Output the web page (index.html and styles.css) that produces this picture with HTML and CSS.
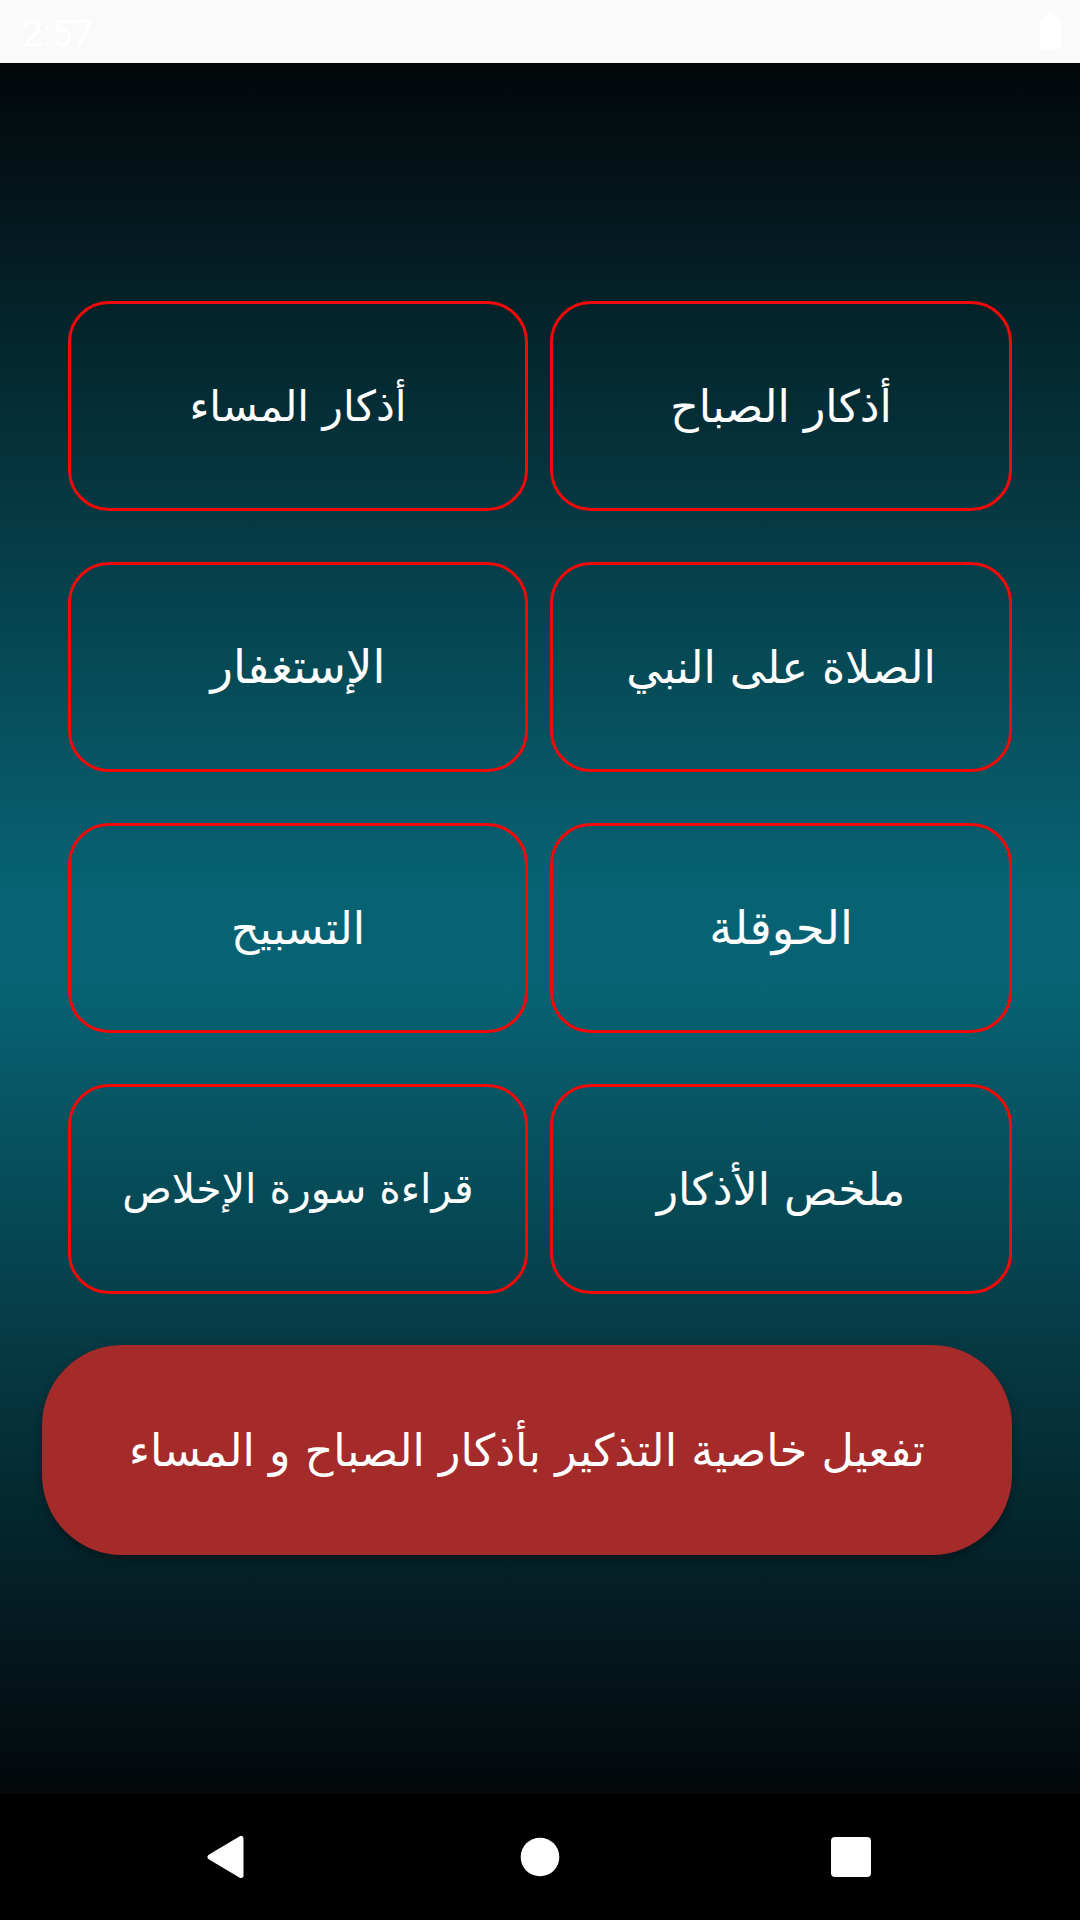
FILE: index.html
```html
<!DOCTYPE html>
<html lang="ar">
<head>
    <meta charset="UTF-8">
    <meta name="viewport" content="width=device-width, initial-scale=1.0">
    <title>الأذكار</title>
    <link rel="stylesheet" href="styles.css">
</head>
<body>
    <header class="status-bar">
        <span class="clock">2:57</span>
        <svg class="battery" width="22" height="36" viewBox="0 0 22 36">
            <path d="M7 3q0-3 3-3h2q3 0 3 3l4 2q3 1 3 4v27H1V8q0-3 3-4z" fill="#fff"/>
        </svg>
    </header>

    <main class="content">
        <div class="cards" dir="rtl">
            <a class="card">أذكار الصباح</a>
            <a class="card text-small">أذكار المساء</a>
            <a class="card">الصلاة على النبي</a>
            <a class="card text-large">الإستغفار</a>
            <a class="card text-large">الحوقلة</a>
            <a class="card">التسبيح</a>
            <a class="card">ملخص الأذكار</a>
            <a class="card text-smaller">قراءة سورة الإخلاص</a>
        </div>
        <button class="reminder-button" dir="rtl">تفعيل خاصية التذكير بأذكار الصباح و المساء</button>
    </main>

    <nav class="nav-bar">
        <svg width="38" height="44" viewBox="0 0 38 44">
            <path d="M34 3.500V40.500L3 22z" fill="#fff" stroke="#fff" stroke-width="5" stroke-linejoin="round"/>
        </svg>
        <svg width="40" height="40" viewBox="0 0 40 40">
            <circle cx="20" cy="20" r="19.300" fill="#fff"/>
        </svg>
        <svg width="40" height="40" viewBox="0 0 40 40">
            <rect width="40" height="40" rx="4" fill="#fff"/>
        </svg>
    </nav>
</body>
</html>
```
FILE: styles.css
```css
* { box-sizing: border-box; }
body {
    font-family: "DejaVu Sans", sans-serif;
    margin: 0;
    height: 1920px;
    display: flex;
    flex-direction: column;
    background-color: #000;
    color: white;
}
.status-bar {
    height: 63px;
    padding: 0 19px 0 22px;
    display: flex;
    justify-content: space-between;
    align-items: center;
    background-color: #fafafa;
}
.clock {
    font-family: Roboto, sans-serif;
    font-size: 37px;
    padding-top: 4px;
}
.battery { margin-bottom: 2px; }
.content {
    height: 1731px;
    padding: 238px 68px 0 42px;
    background: linear-gradient(#03070a, #076373 48%, #076373 53%, #03070a);
}
.cards {
    display: grid;
    grid-template-columns: 462px 460px;
    grid-auto-rows: 210px;
    gap: 51px 22px;
    margin-bottom: 51px;
}
.card {
    display: flex;
    justify-content: center;
    align-items: center;
    border: 3px solid #f00a0a;
    border-radius: 41px;
    font-size: 44.3px;
    white-space: nowrap;
}
.text-small { font-size: 42.3px; }
.text-smaller { font-size: 41px; }
.text-large { font-size: 46.5px; }
.reminder-button {
    display: block;
    width: 970px;
    height: 210px;
    padding: 0;
    border: none;
    border-radius: 80px;
    background-color: #a52a2a;
    color: white;
    font-family: inherit;
    font-size: 44.5px;
    white-space: nowrap;
    box-shadow: 0 4px 8px rgba(0, 0, 0, 0.35);
}
.nav-bar {
    flex: 1;
    padding: 0 209px 0 207px;
    display: grid;
    grid-template-columns: 313px 1fr 40px;
    align-items: center;
}
```
